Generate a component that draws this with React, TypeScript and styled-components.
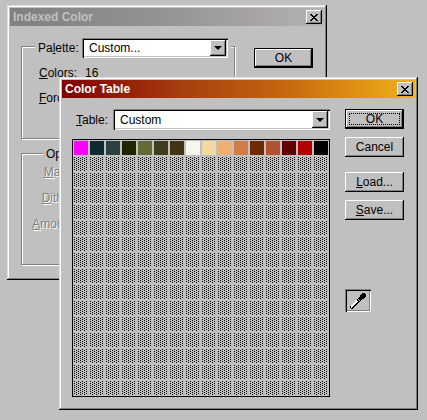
import React from 'react';
import styled, { createGlobalStyle, css } from 'styled-components';

const GlobalStyle = createGlobalStyle`
    html, body {
        margin: 0;
        background: #c0c0c0;
    }
    * {
        box-sizing: border-box;
    }
`

const Desktop = styled.div`
    position: relative;
    width: 427px;
    height: 420px;
    overflow: hidden;
    background: #c0c0c0;
    color: #000;
    font-family: "Liberation Sans", Arial, sans-serif;
    font-size: 12px;
    line-height: 14px;
`

const Dialog = styled.div<{ $left: number; $top: number; $width: number; $height: number }>`
    position: absolute;
    left: ${p => p.$left}px;
    top: ${p => p.$top}px;
    width: ${p => p.$width}px;
    height: ${p => p.$height}px;
    padding: 3px;
    background: #c0c0c0;
    box-shadow: inset -1px -1px 0 #000, inset 1px 1px 0 #dfdfdf, inset -2px -2px 0 #808080, inset 2px 2px 0 #fff;
`

const TitleBar = styled.div<{ $active?: boolean }>`
    display: flex;
    align-items: center;
    justify-content: space-between;
    height: 18px;
    padding: 0 2px 0 3px;
    font-weight: 700;
    color: ${p => (p.$active ? '#fff' : '#c0c0c0')};
    background: ${p => p.$active
        ? 'linear-gradient(90deg, #800000 0%, #a8400f 35%, #c4650f 62%, #e39a14 88%, #f0b020 100%)'
        : 'linear-gradient(90deg, #808080 0%, #929292 45%, #a8a4a8 80%, #b4b4b4 100%)'};
`

const CloseButton = styled.div`
    display: flex;
    align-items: center;
    justify-content: center;
    width: 16px;
    height: 14px;
    background: #c0c0c0;
    box-shadow: inset -1px -1px 0 #000, inset 1px 1px 0 #fff, inset -2px -2px 0 #808080;
`

const Body = styled.div<{ $top: number; $gap: number }>`
    display: flex;
    gap: ${p => p.$gap}px;
    padding: ${p => p.$top}px 0 0 ${p => (p.$top > 15 ? 11 : 10)}px;
`

const Column = styled.div<{ $width?: number; $top?: number }>`
    display: flex;
    flex-direction: column;
    flex: none;
    width: ${p => (p.$width ? `${p.$width}px` : 'auto')};
    margin-top: ${p => p.$top ?? 0}px;
`

const Group = styled.div<{ $height: number; $pad: number; $gap: number; $after?: number }>`
    position: relative;
    display: flex;
    flex-direction: column;
    gap: ${p => p.$gap}px;
    height: ${p => p.$height}px;
    margin-bottom: ${p => p.$after ?? 0}px;
    padding-top: ${p => p.$pad}px;
    border: 1px solid #808080;
    box-shadow: inset 1px 1px 0 #fff, 1px 1px 0 #fff;
`

const Legend = styled.div<{ $left: number; $top: number }>`
    position: absolute;
    left: ${p => p.$left}px;
    top: ${p => p.$top}px;
    display: flex;
    align-items: center;
    padding: 0 3px;
    background: #c0c0c0;
`

const FieldRow = styled.div<{ $indent?: number }>`
    display: flex;
    gap: 8px;
    height: 14px;
    padding-left: ${p => p.$indent ?? 0}px;
`

const Dim = styled.span`
    width: 55px;
    text-align: right;
    color: #808080;
    text-shadow: 1px 1px 0 #fff;
    white-space: nowrap;
`

const Combo = styled.div<{ $width: number; $height: number }>`
    display: flex;
    justify-content: space-between;
    align-items: center;
    width: ${p => p.$width}px;
    height: ${p => p.$height}px;
    padding: 2px 2px 2px 7px;
    background: #fff;
    box-shadow: inset 1px 1px 0 #808080, inset 2px 2px 0 #000, inset -1px -1px 0 #fff, inset -2px -2px 0 #c0c0c0;
`

const ComboArrow = styled.div`
    display: flex;
    align-items: center;
    justify-content: center;
    width: 16px;
    align-self: stretch;
    background: #c0c0c0;
    box-shadow: inset -1px -1px 0 #000, inset 1px 1px 0 #fff, inset -2px -2px 0 #808080;

    &::after {
        content: "";
        border-left: 4px solid transparent;
        border-right: 4px solid transparent;
        border-top: 4px solid #000;
    }
`

const raised = css`
    box-shadow: inset -1px -1px 0 #000, inset 1px 1px 0 #fff, inset -2px -2px 0 #808080;
`

const defaulted = css`
    border: 1px solid #000;
    box-shadow: inset -1px -1px 0 #000, inset 1px 1px 0 #fff, inset -2px -2px 0 #808080;
`

const PushButton = styled.div<{ $primary?: boolean; $focused?: boolean; $after?: number }>`
    display: flex;
    align-items: center;
    justify-content: center;
    flex: none;
    width: 59px;
    height: 20px;
    margin-bottom: ${p => p.$after ?? 0}px;
    background: #c0c0c0;
    ${p => (p.$primary ? defaulted : raised)}
    ${p => p.$focused && 'outline: 1px dotted #000; outline-offset: -5px;'}
`

const TableRow = styled.div`
    display: flex;
    align-items: center;
    height: 21px;
    margin-bottom: 9px;
    padding-left: 4px;
`

const FieldLabel = styled.span<{ $width: number }>`
    width: ${p => p.$width}px;
`

const SwatchGrid = styled.div`
    display: grid;
    grid-template-columns: repeat(16, 14px);
    grid-auto-rows: 14px;
    gap: 2px;
    width: 258px;
    height: 258px;
    padding: 1px;
    border: 1px solid #000;
`

const Swatch = styled.div<{ $color: string }>`
    background: ${p => p.$color};
`

// empty table entries are a staggered dot screen: two sets of dots, each
// made from black columns masked down to every other row
const EmptySwatch = styled.div`
    position: relative;

    &::before,
    &::after {
        content: "";
        position: absolute;
        inset: 0;
        background: linear-gradient(90deg, #000 1px, transparent 1px) 0 0 / 4px 2px;
        mask: linear-gradient(#000 1px, transparent 1px) 0 0 / 4px 2px;
    }

    &::after {
        background-position: 2px 0;
        mask-position: 0 1px;
    }
`

const PickerButton = styled.div`
    display: flex;
    align-items: center;
    justify-content: center;
    width: 26px;
    height: 23px;
    margin-top: 69px;
    background: #c0c0c0;
    box-shadow: inset 1px 1px 0 #808080, inset 2px 2px 0 #000, inset -1px -1px 0 #fff, inset -2px -2px 0 #808080;
`

const palette = [
    '#ff00ff', '#102a33', '#2f4040', '#1e2600',
    '#616b33', '#3f3f1f', '#433414', '#f3f7ec',
    '#f1d9a0', '#f0b070', '#d07c46', '#702c00',
    '#b0522f', '#600000', '#b00000', '#000000',
]

const CloseIcon = () => (
    <svg width="8" height="7" viewBox="0 0 8 7" shapeRendering="crispEdges">
        <path d="M0 0h2v1h1v1h2V1h1V0h2v1H7v1H6v1H5v1h1v1h1v1h1v1H6V6H5V5H3v1H2v1H0V6h1V5h1V4h1V3H2V2H1V1H0z" fill="#000" />
    </svg>
)

const DropperIcon = () => (
    <svg width="20" height="18" viewBox="0 0 20 18" shapeRendering="crispEdges">
        <path d="M3 17h2v-1h1v-1h1v-1h1v-1h1v-1h1v-1h1v-1h1V9h-1V8h-1V7H9v1H8v1H7v1H6v1H5v1H4v1H3v1H2v2h1z" fill="#000" />
        <path d="M3 16h1v-1h1v-1h1v-1h1v-1h1v-1h1v-1h1V9H9V8H8v1H7v1H6v1H5v1H4v1H3v1z" fill="#fff" />
        <path d="M10 6h1V5h1V3h1V2h1V1h3v1h1v3h-1v1h-1v1h-2v1h-1v1h-1V8h-1V7h-1z" fill="#000" />
    </svg>
)

const App = () => {
    return (
        <Desktop>
            <GlobalStyle />
            <Dialog $left={7} $top={5} $width={320} $height={275}>
                <TitleBar>
                    Indexed Color
                    <CloseButton><CloseIcon /></CloseButton>
                </TitleBar>
                <Body $top={20} $gap={19}>
                    <Column $width={214}>
                        <Group $height={93} $pad={19} $gap={11} $after={14}>
                            <Legend $left={13} $top={-9}>
                                <FieldLabel $width={44}>Pa<u>l</u>ette:</FieldLabel>
                                <Combo $width={146} $height={20}>
                                    Custom...
                                    <ComboArrow />
                                </Combo>
                            </Legend>
                            <FieldRow $indent={17}>
                                <span><u>C</u>olors:</span>
                                <span>16</span>
                            </FieldRow>
                            <FieldRow $indent={17}>
                                <span><u>F</u>orced:</span>
                            </FieldRow>
                        </Group>
                        <Group $height={112} $pad={11} $gap={12}>
                            <Legend $left={21} $top={-7}>Options</Legend>
                            <FieldRow>
                                <Dim><u>M</u>atte:</Dim>
                            </FieldRow>
                            <FieldRow>
                                <Dim><u>D</u>ither:</Dim>
                            </FieldRow>
                            <FieldRow>
                                <Dim><u>A</u>mount:</Dim>
                            </FieldRow>
                        </Group>
                    </Column>
                    <Column $top={2}>
                        <PushButton $primary $after={9}>OK</PushButton>
                        <PushButton>Cancel</PushButton>
                    </Column>
                </Body>
            </Dialog>
            <Dialog $left={59} $top={77} $width={359} $height={333}>
                <TitleBar $active>
                    Color Table
                    <CloseButton><CloseIcon /></CloseButton>
                </TitleBar>
                <Body $top={11} $gap={15}>
                    <Column>
                        <TableRow>
                            <FieldLabel $width={37}><u>T</u>able:</FieldLabel>
                            <Combo $width={217} $height={21}>
                                Custom
                                <ComboArrow />
                            </Combo>
                        </TableRow>
                        <SwatchGrid>
                            {Array.from({ length: 256 }, (_, i) =>
                                i < palette.length
                                    ? <Swatch key={i} $color={palette[i]} />
                                    : <EmptySwatch key={i} />
                            )}
                        </SwatchGrid>
                    </Column>
                    <Column>
                        <PushButton $primary $focused $after={8}>OK</PushButton>
                        <PushButton $after={15}>Cancel</PushButton>
                        <PushButton $after={8}><span><u>L</u>oad...</span></PushButton>
                        <PushButton><span><u>S</u>ave...</span></PushButton>
                        <PickerButton><DropperIcon /></PickerButton>
                    </Column>
                </Body>
            </Dialog>
        </Desktop>
    );
};

export default App;
